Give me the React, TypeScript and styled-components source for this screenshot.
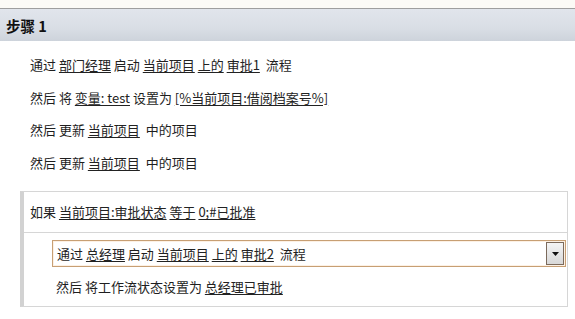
import React from 'react';
import styled, { createGlobalStyle } from 'styled-components';

const GlobalStyle = createGlobalStyle`
    body {
        margin: 0;
        background: #fff;
        font-family: 'Noto Sans CJK SC', 'Noto Sans', sans-serif;
        color: #1e1e1e;
    }
`;

const Page = styled.div`
    width: 575px;
    height: 319px;
    overflow: hidden;
    padding-top: 8px;
    background: linear-gradient(#fbfaf6, #fbfaf6) top / 100% 8px no-repeat, #fff;
`;

const StepHeader = styled.div`
    height: 32px;
    border-top: 1px solid #9e9e9e;
    background: linear-gradient(#e1e5ec, #d9dee5 60%, #cdd3db);
    display: flex;
    align-items: center;
    padding-left: 6px;
    font-size: 14.5px;
    font-weight: 700;
    color: #111;
`;

const Actions = styled.div`
    padding: 8px 0 0 30px;
`;

const Row = styled.div`
    height: 32.5px;
    line-height: 32.5px;
    font-size: 13px;
    white-space: pre;
`;

const Link = styled.span`
    text-decoration: underline;
    text-underline-offset: 2px;
    color: #222;
`;

const Condition = styled.div`
    margin: 12px 7px 0 20px;
    border: 1px solid #d6d6d6;
    border-left: 4px solid #d2d2d2;
`;

const ConditionHead = styled.div`
    height: 40px;
    line-height: 40px;
    padding-left: 6px;
    font-size: 13px;
    white-space: pre;
    border-bottom: 1px solid #d6d6d6;
`;

const Nested = styled.div`
    padding: 7px 1px 0 28px;
`;

const Selected = styled.div`
    height: 25px;
    border: 1px solid #c79f74;
    box-shadow: inset 0 0 0 1px #fdf1e4;
    display: flex;
    align-items: center;
    justify-content: space-between;
    padding-left: 4px;
    font-size: 13px;
`;

const SelectedText = styled.span`
    white-space: pre;
`;

const DropButton = styled.div`
    width: 16px;
    height: 21px;
    margin-right: 1px;
    border: 1px solid #7b6a5c;
    background: linear-gradient(#f4f4f4, #d8d8d8);
    display: flex;
    align-items: center;
    justify-content: center;
`;

const NestedRow = styled(Row)`
    padding-left: 4px;
    height: 39px;
    line-height: 39px;
`;

export default function App() {
    return (
        <Page>
            <GlobalStyle />
            <StepHeader>步骤 1</StepHeader>
            <Actions>
                <Row>通过 <Link>部门经理</Link> 启动 <Link>当前项目</Link> <Link>上的</Link> <Link>审批1</Link>  流程</Row>
                <Row>然后 将 <Link>变量: test</Link> 设置为 <Link>[%当前项目:借阅档案号%]</Link></Row>
                <Row>然后 更新 <Link>当前项目</Link>  中的项目</Row>
                <Row>然后 更新 <Link>当前项目</Link>  中的项目</Row>
            </Actions>
            <Condition>
                <ConditionHead>如果 <Link>当前项目:审批状态</Link> <Link>等于</Link> <Link>0;#已批准</Link></ConditionHead>
                <Nested>
                    <Selected>
                        <SelectedText>通过 <Link>总经理</Link> 启动 <Link>当前项目</Link> <Link>上的</Link> <Link>审批2</Link>  流程</SelectedText>
                        <DropButton>
                            <svg width="7" height="4" viewBox="0 0 7 4">
                                <path d="M0 0h7L3.5 4z" fill="#111" />
                            </svg>
                        </DropButton>
                    </Selected>
                    <NestedRow>然后 将工作流状态设置为 <Link>总经理已审批</Link></NestedRow>
                </Nested>
            </Condition>
        </Page>
    );
}
